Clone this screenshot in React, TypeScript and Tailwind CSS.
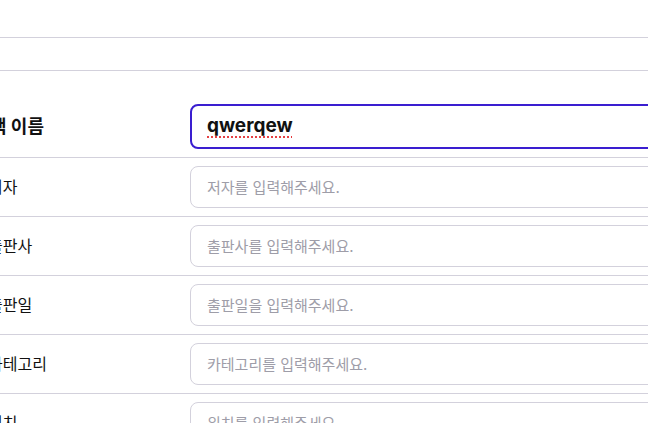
import { useEffect, useRef, useState } from 'react'

const fields = [
  { key: 'author', label: '저자', placeholder: '저자를 입력해주세요.' },
  { key: 'publisher', label: '출판사', placeholder: '출판사를 입력해주세요.' },
  { key: 'publishedAt', label: '출판일', placeholder: '출판일을 입력해주세요.' },
  { key: 'category', label: '카테고리', placeholder: '카테고리를 입력해주세요.' },
  { key: 'location', label: '위치', placeholder: '위치를 입력해주세요.' },
]

export default function App() {
  const [title, setTitle] = useState('qwerqew')
  const titleRef = useRef<HTMLInputElement>(null)

  useEffect(() => {
    // focus without letting the clipped page scroll sideways
    titleRef.current?.focus({ preventScroll: true })
  }, [])

  return (
    <div className="h-[423px] w-[648px] overflow-hidden bg-white font-['Inter','Noto_Sans_CJK_KR',sans-serif] text-[#111]">
      <div className="ml-[-12px] w-[900px]">
        <div className="h-[37px]" />
        <div className="h-[34px] border-y border-[#d3d1dc]" />

        <div className="grid grid-cols-[202px_1fr] items-center border-b border-[#d3d1dc] pt-[33px] pb-[8px]">
          <label className="pl-[2px] text-[18px] font-bold">책 이름</label>
          <div className="flex h-[45px] w-[600px] items-center rounded-lg border-2 border-[#3a1ed0] px-[15px]">
            <input
              ref={titleRef}
              value={title}
              onChange={(e) => setTitle(e.target.value)}
              className="w-full bg-transparent text-[19px] font-bold underline decoration-dotted decoration-[#e5383b] underline-offset-[4px] outline-none caret-black"
            />
          </div>
        </div>

        {fields.map((f) => (
          <div key={f.key} className="grid grid-cols-[202px_1fr] items-center border-b border-[#d3d1dc] py-[8px]">
            <label className="text-[16px]">{f.label}</label>
            <input
              placeholder={f.placeholder}
              className="h-[42px] w-[600px] rounded-lg border border-[#d3d1dc] px-[16px] text-[15px] outline-none placeholder:text-[#9e9da8]"
            />
          </div>
        ))}
      </div>
    </div>
  )
}
